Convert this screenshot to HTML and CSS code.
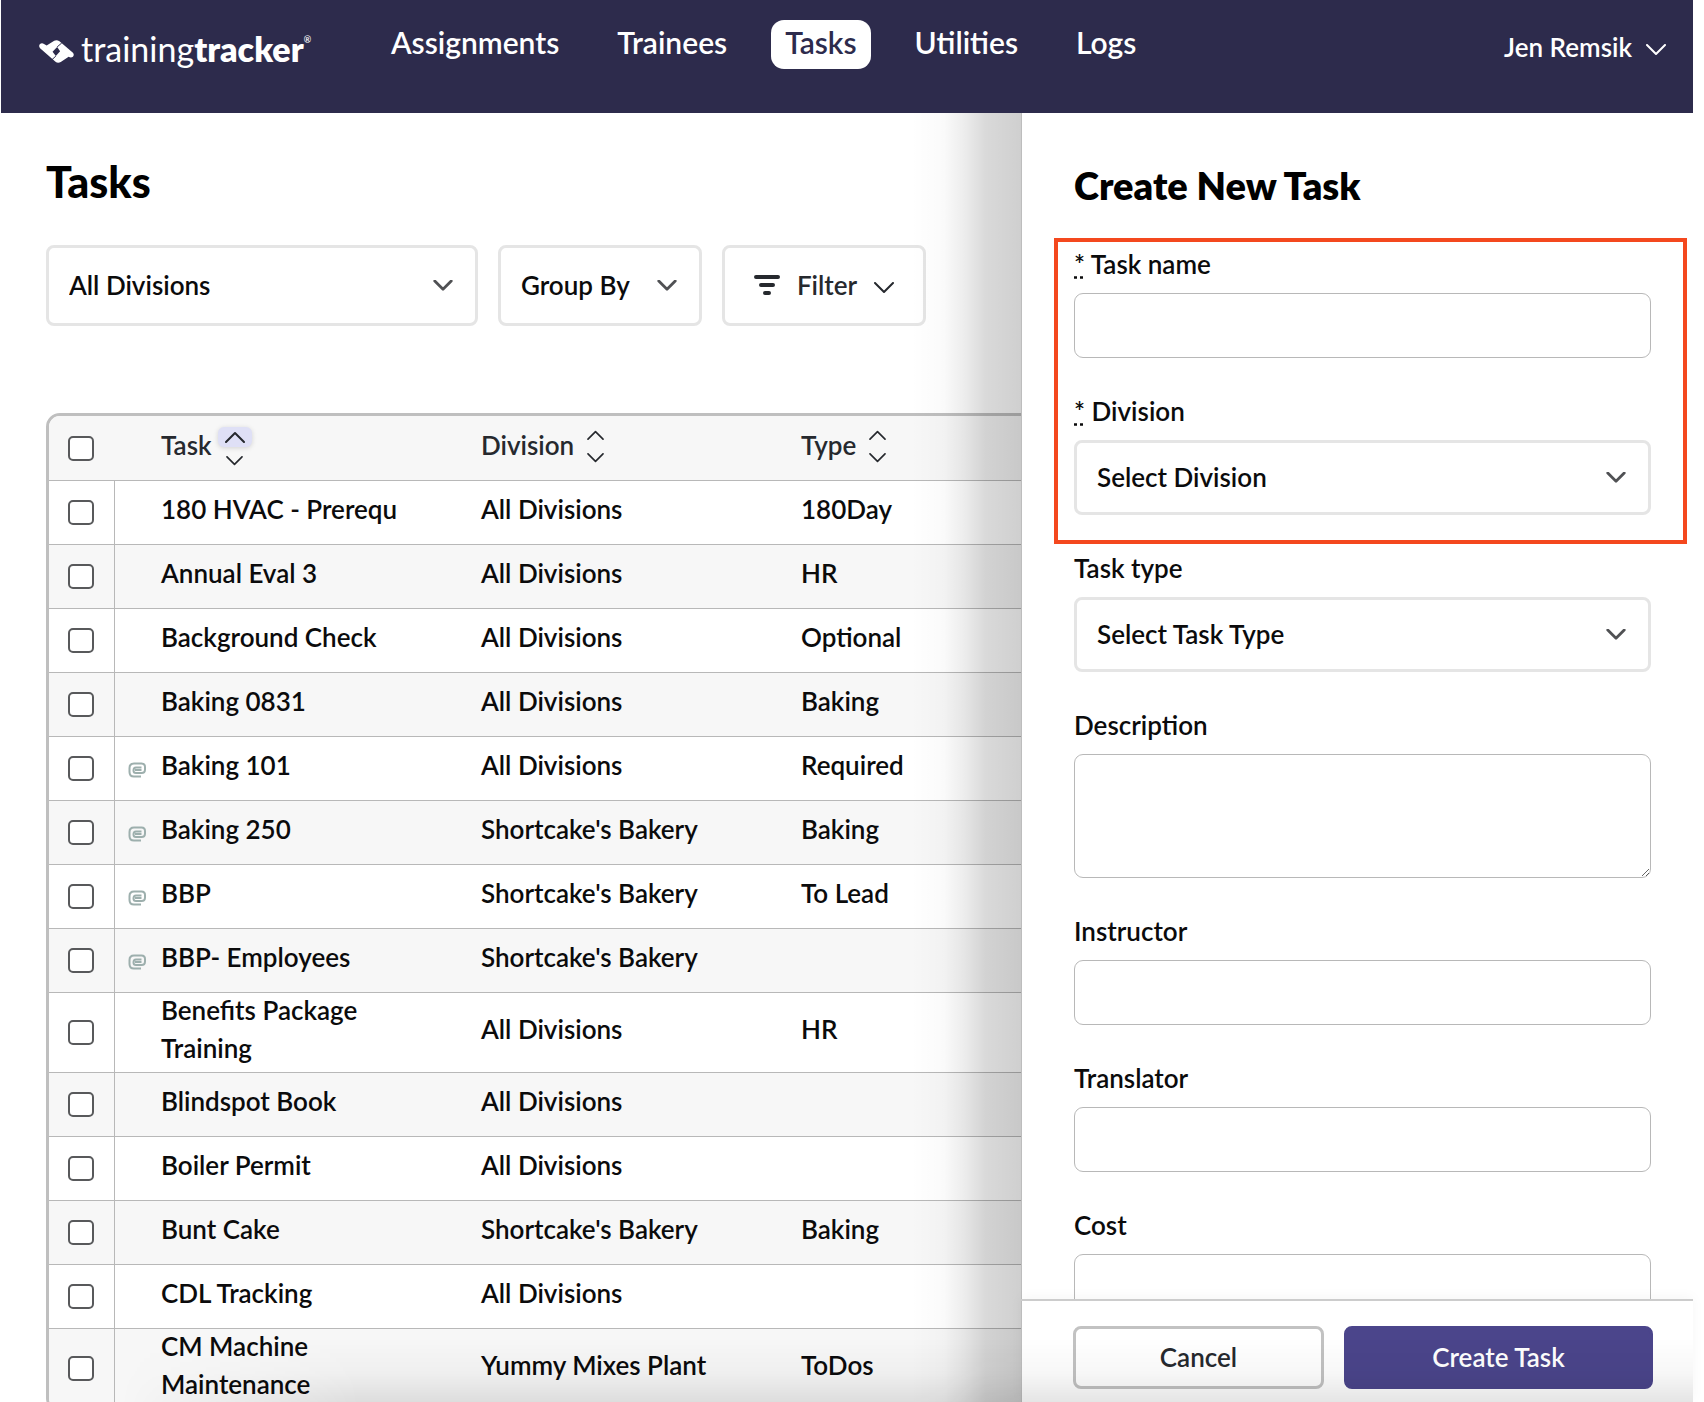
FILE: index.html
```html
<!DOCTYPE html>
<html lang="en">
<head>
<meta charset="utf-8">
<meta name="viewport" content="width=device-width, initial-scale=1">
<title>Tasks - trainingtracker</title>
<link rel="stylesheet" href="styles.css">
</head>
<body>
<svg class="sprite" aria-hidden="true">
  <symbol id="chevron-down" viewBox="0 0 20 12"><path d="M1 1l9 9 9-9" fill="none" stroke="currentColor" stroke-linecap="round" stroke-linejoin="round"/></symbol>
  <symbol id="chevron-up" viewBox="0 0 20 12"><path d="M1 11l9-9 9 9" fill="none" stroke="currentColor" stroke-linecap="round" stroke-linejoin="round"/></symbol>
  <symbol id="clip" viewBox="0 0 18 16"><path d="M13 14.500H6Q1.500 14.500 1.500 10V6Q1.500 1.500 6 1.500H13.500Q17 1.500 17 5V7.500Q17 11 13.500 11H8Q5.500 11 5.500 8.500 5.500 5.500 8 5.500H13.500M7 8H13.500" fill="none" stroke="currentColor" stroke-width="2"/></symbol>
</svg>

<header class="topbar">
  <a class="brand" href="#">
    <svg class="brand-mark" viewBox="0 0 106 70" aria-hidden="true">
      <path fill="#fff" fill-rule="evenodd" d="M2 13Q8 8 15 12L23 17 46 2Q54-2 62 4L103 39Q108 45 103 51 97 56 90 51L66 67Q57 72 50 66L3 25Q-2 19 2 13ZM41 36L51 49 64 34 55 21Z"/>
      <path stroke="#2d2b4c" stroke-width="3" fill="none" d="M55 21L69 9M51 49L38 61"/>
    </svg>
    <span class="brand-name">training<b>tracker</b></span><sup class="brand-reg">®</sup>
  </a>
  <nav class="nav" aria-label="Main">
    <a class="nav-link" href="#">Assignments</a>
    <a class="nav-link" href="#">Trainees</a>
    <a class="nav-link nav-link-active" href="#" aria-current="page">Tasks</a>
    <a class="nav-link" href="#">Utilities</a>
    <a class="nav-link" href="#">Logs</a>
  </nav>
  <button class="user" type="button">Jen Remsik <svg class="icon-thin icon-caret" aria-hidden="true"><use href="#chevron-down"/></svg></button>
</header>

<div class="workspace">
  <main class="content">
    <h1 class="page-title">Tasks</h1>
    <div class="toolbar">
      <div class="picker picker-wide">
        <select aria-label="Division filter"><option>All Divisions</option></select>
        <svg class="icon-bold" aria-hidden="true"><use href="#chevron-down"/></svg>
      </div>
      <div class="picker picker-small">
        <select aria-label="Group by"><option>Group By</option></select>
        <svg class="icon-bold" aria-hidden="true"><use href="#chevron-down"/></svg>
      </div>
      <button class="filter" type="button">
        <svg class="filter-icon" viewBox="0 0 26 20" aria-hidden="true"><path d="M2 2H24M7 10H19M11 18H15" stroke="currentColor" stroke-width="4" stroke-linecap="round"/></svg>
        <span>Filter</span>
        <svg class="icon-thin icon-caret" aria-hidden="true"><use href="#chevron-down"/></svg>
      </button>
    </div>

    <div class="table-frame">
      <table class="tasks">
        <colgroup><col class="col-check"><col class="col-clip"><col class="col-data"><col class="col-data"><col class="col-data"></colgroup>
        <thead>
          <tr>
            <th class="check"><input type="checkbox" aria-label="Select all tasks"></th>
            <th></th>
            <th><div class="sortable"><span class="heading">Task</span> <span class="sort"><span class="sort-on"><svg class="icon-thin" aria-hidden="true"><use href="#chevron-up"/></svg></span><svg class="icon-sort" aria-hidden="true"><use href="#chevron-down"/></svg></span></div></th>
            <th><div class="sortable"><span class="heading">Division</span> <span class="sort sort-plain"><svg class="icon-sort" aria-hidden="true"><use href="#chevron-up"/></svg><svg class="icon-sort" aria-hidden="true"><use href="#chevron-down"/></svg></span></div></th>
            <th><div class="sortable"><span class="heading">Type</span> <span class="sort sort-plain"><svg class="icon-sort" aria-hidden="true"><use href="#chevron-up"/></svg><svg class="icon-sort" aria-hidden="true"><use href="#chevron-down"/></svg></span></div></th>
          </tr>
        </thead>
        <tbody>
          <tr><td class="check"><input type="checkbox" aria-label="Select 180 HVAC - Prerequ"></td><td></td><td><span class="text">180 HVAC - Prerequ</span></td><td><span class="text">All Divisions</span></td><td><span class="text">180Day</span></td></tr>
          <tr><td class="check"><input type="checkbox" aria-label="Select Annual Eval 3"></td><td></td><td><span class="text">Annual Eval 3</span></td><td><span class="text">All Divisions</span></td><td><span class="text">HR</span></td></tr>
          <tr><td class="check"><input type="checkbox" aria-label="Select Background Check"></td><td></td><td><span class="text">Background Check</span></td><td><span class="text">All Divisions</span></td><td><span class="text">Optional</span></td></tr>
          <tr><td class="check"><input type="checkbox" aria-label="Select Baking 0831"></td><td></td><td><span class="text">Baking 0831</span></td><td><span class="text">All Divisions</span></td><td><span class="text">Baking</span></td></tr>
          <tr><td class="check"><input type="checkbox" aria-label="Select Baking 101"></td><td class="clip"><svg aria-hidden="true"><use href="#clip"/></svg></td><td><span class="text">Baking 101</span></td><td><span class="text">All Divisions</span></td><td><span class="text">Required</span></td></tr>
          <tr><td class="check"><input type="checkbox" aria-label="Select Baking 250"></td><td class="clip"><svg aria-hidden="true"><use href="#clip"/></svg></td><td><span class="text">Baking 250</span></td><td><span class="text">Shortcake's Bakery</span></td><td><span class="text">Baking</span></td></tr>
          <tr><td class="check"><input type="checkbox" aria-label="Select BBP"></td><td class="clip"><svg aria-hidden="true"><use href="#clip"/></svg></td><td><span class="text">BBP</span></td><td><span class="text">Shortcake's Bakery</span></td><td><span class="text">To Lead</span></td></tr>
          <tr><td class="check"><input type="checkbox" aria-label="Select BBP- Employees"></td><td class="clip"><svg aria-hidden="true"><use href="#clip"/></svg></td><td><span class="text">BBP- Employees</span></td><td><span class="text">Shortcake's Bakery</span></td><td></td></tr>
          <tr><td class="check"><input type="checkbox" aria-label="Select Benefits Package Training"></td><td></td><td><span class="text">Benefits Package Training</span></td><td><span class="text">All Divisions</span></td><td><span class="text">HR</span></td></tr>
          <tr><td class="check"><input type="checkbox" aria-label="Select Blindspot Book"></td><td></td><td><span class="text">Blindspot Book</span></td><td><span class="text">All Divisions</span></td><td></td></tr>
          <tr><td class="check"><input type="checkbox" aria-label="Select Boiler Permit"></td><td></td><td><span class="text">Boiler Permit</span></td><td><span class="text">All Divisions</span></td><td></td></tr>
          <tr><td class="check"><input type="checkbox" aria-label="Select Bunt Cake"></td><td></td><td><span class="text">Bunt Cake</span></td><td><span class="text">Shortcake's Bakery</span></td><td><span class="text">Baking</span></td></tr>
          <tr><td class="check"><input type="checkbox" aria-label="Select CDL Tracking"></td><td></td><td><span class="text">CDL Tracking</span></td><td><span class="text">All Divisions</span></td><td></td></tr>
          <tr><td class="check"><input type="checkbox" aria-label="Select CM Machine Maintenance"></td><td></td><td><span class="text">CM Machine Maintenance</span></td><td><span class="text">Yummy Mixes Plant</span></td><td><span class="text">ToDos</span></td></tr>
        </tbody>
      </table>
    </div>
  </main>

  <aside class="panel" aria-label="Create New Task">
    <form class="form">
      <div class="form-body">
        <h2 class="panel-title">Create New Task</h2>
        <div class="required-group">
          <div class="field">
            <label for="task-name"><abbr title="required">*</abbr> Task name</label>
            <input class="control" id="task-name" type="text">
          </div>
          <div class="field">
            <label for="division"><abbr title="required">*</abbr> Division</label>
            <div class="picker">
              <select id="division"><option>Select Division</option></select>
              <svg class="icon-bold" aria-hidden="true"><use href="#chevron-down"/></svg>
            </div>
          </div>
        </div>
        <div class="field">
          <label for="task-type">Task type</label>
          <div class="picker">
            <select id="task-type"><option>Select Task Type</option></select>
            <svg class="icon-bold" aria-hidden="true"><use href="#chevron-down"/></svg>
          </div>
        </div>
        <div class="field">
          <label for="description">Description</label>
          <textarea class="control control-tall" id="description"></textarea>
        </div>
        <div class="field">
          <label for="instructor">Instructor</label>
          <input class="control" id="instructor" type="text">
        </div>
        <div class="field">
          <label for="translator">Translator</label>
          <input class="control" id="translator" type="text">
        </div>
        <div class="field">
          <label for="cost">Cost</label>
          <input class="control" id="cost" type="text">
        </div>
      </div>
      <div class="form-footer">
        <button class="btn btn-cancel" type="button">Cancel</button>
        <button class="btn btn-primary" type="submit">Create Task</button>
      </div>
    </form>
  </aside>
</div>
<div class="bottom-shade"></div>
</body>
</html>
```
FILE: styles.css
```css
* {
  box-sizing: border-box;
}

body {
  display: flex;
  flex-direction: column;
  height: 100vh;
  margin: 0;
  padding: 0 11px 0 1px;
  overflow: hidden;
  background: #fff;
  color: #0b0b0c;
  font: 600 26px/38px Lato, "Open Sans", sans-serif;
}

button,
input,
select,
textarea {
  margin: 0;
  font: inherit;
  color: inherit;
}

button {
  cursor: pointer;
}

svg {
  display: block;
  flex: none;
}

.sprite {
  position: absolute;
  width: 0;
  height: 0;
}

/* Chevrons */
.icon-thin {
  width: 20px;
  height: 12px;
  stroke-width: 2px;
}

.icon-bold {
  width: 20px;
  height: 11px;
  color: #505154;
  stroke-width: 3px;
}

.icon-sort {
  width: 17px;
  height: 10px;
  stroke-width: 2px;
}

.icon-caret {
  margin-top: 6px;
}

/* Top bar */
.topbar {
  display: flex;
  align-items: flex-start;
  flex: none;
  height: 113px;
  padding: 20px 27px 0 38px;
  background: #2d2b4c;
  color: #fff;
}

.brand {
  display: flex;
  align-items: flex-start;
  width: 338px;
  padding-top: 10px;
  color: inherit;
  text-decoration: none;
}

.brand-mark {
  width: 35px;
  height: 23px;
  margin: 10px 7px 0 0;
}

.brand-name {
  font-size: 34px;
  font-weight: 400;
}

.brand-name b {
  font-weight: 800;
}

.brand-reg {
  padding-top: 5px;
  font-size: 9px;
  line-height: 9px;
}

.nav {
  display: flex;
  flex: 1;
  gap: 30px;
}

.nav-link {
  padding: 0 14px 4px;
  border-radius: 13px;
  color: inherit;
  font-size: 30px;
  line-height: 45px;
  text-decoration: none;
}

.nav-link-active {
  background: #fff;
  color: #2d2b4c;
}

.user {
  display: flex;
  align-items: center;
  gap: 14px;
  padding: 8px 0 0;
  border: 0;
  background: none;
}

/* Workspace */
.workspace {
  display: flex;
  flex: 1;
  min-height: 0;
}

.content {
  flex: 1;
  min-width: 0;
  padding: 45px 0 0 45px;
  overflow: hidden;
}

.page-title {
  margin: 0 0 39px;
  color: #000;
  font-size: 43px;
  font-weight: 900;
  line-height: 48px;
}

.toolbar {
  display: flex;
  gap: 20px;
  height: 81px;
  margin-bottom: 87px;
}

.picker {
  display: grid;
  align-items: center;
}

.picker > * {
  grid-area: 1 / 1;
}

.picker select {
  width: 100%;
  height: 100%;
  padding: 0 60px 2px 20px;
  border: 3px solid #e5e5e5;
  border-radius: 8px;
  background: #fff;
  appearance: none;
  outline: 0;
}

.picker svg {
  justify-self: end;
  margin-right: 25px;
  pointer-events: none;
}

.picker-wide {
  width: 432px;
}

.picker-small {
  width: 204px;
}

.filter {
  display: flex;
  align-items: center;
  justify-content: center;
  gap: 17px;
  width: 204px;
  padding: 0 0 2px;
  border: 3px solid #e5e5e5;
  border-radius: 8px;
  background: #fff;
  color: #26292e;
}

.filter-icon {
  width: 26px;
  height: 20px;
}

/* Task table */
.table-frame {
  width: max-content;
  overflow: hidden;
  border: 3px solid #bfbfbf;
  border-radius: 14px;
}

.tasks {
  width: 1072px;
  table-layout: fixed;
  border-spacing: 0;
}

.col-check {
  width: 66px;
}

.col-clip {
  width: 46px;
}

.col-data {
  width: 320px;
}

.tasks th,
.tasks td {
  height: 64px;
  padding: 0 0 3px;
  border-bottom: 1px solid #b8b8b8;
  text-align: left;
  vertical-align: middle;
}

.tasks th {
  height: 65px;
  background: #f7f7f7;
  color: #26292e;
  font-weight: 600;
}

.tasks tbody tr:nth-child(even) {
  background: #f7f7f7;
}

.tasks tbody .check {
  border-right: 1px solid #b8b8b8;
}

.tasks .check {
  padding: 0 0 0 19px;
}

.check input {
  display: block;
  width: 26px;
  height: 25px;
  border: 2px solid #58595b;
  border-radius: 5px;
  background: #fff;
  appearance: none;
}

.text {
  display: block;
  margin: -2px 40px 2px 0;
}

.tasks .clip {
  padding: 3px 0 0 13px;
}

.clip svg {
  width: 18px;
  height: 16px;
  color: #9dafad;
}

.sortable {
  display: flex;
  align-items: center;
  gap: 6px;
}

.heading {
  padding-bottom: 4px;
}

.sort {
  display: grid;
  gap: 9px;
  justify-items: center;
}

.sort-plain {
  gap: 13px;
  padding-left: 7px;
}

.sort-on {
  padding: 4px 7px;
  border-radius: 6px;
  background: #dfe0f6;
  box-shadow: 0 1px 5px rgba(0, 0, 0, .15);
}

/* Create task panel */
.panel {
  position: relative;
  width: 672px;
  border-left: 1px solid #bdbdbd;
  background: #fff;
}

.panel::before {
  content: "";
  position: absolute;
  top: 0;
  right: 100%;
  bottom: 0;
  width: 110px;
  margin-right: 1px;
  background: linear-gradient(to right, rgba(0, 0, 0, 0), rgba(0, 0, 0, .02) 30%, rgba(0, 0, 0, .07) 48%, rgba(0, 0, 0, .15) 68%, rgba(0, 0, 0, .19));
  pointer-events: none;
}

.form {
  display: flex;
  flex-direction: column;
  height: 100%;
}

.form-body {
  display: flex;
  flex: 1;
  flex-direction: column;
  gap: 33px;
  min-height: 0;
  padding: 50px 42px 0 52px;
  overflow: hidden;
}

.panel-title {
  margin: 0 0 4px;
  color: #000;
  font-size: 38px;
  font-weight: 800;
  line-height: 44px;
}

.required-group {
  position: relative;
  display: grid;
  gap: 33px;
}

.required-group::after {
  content: "";
  position: absolute;
  inset: -6px -36px -29px -20px;
  border: 4px solid #f4481e;
  pointer-events: none;
}

.field {
  display: grid;
  flex: none;
  gap: 9px;
}

.field label {
  line-height: 40px;
}

.field abbr {
  text-decoration: underline dotted;
}

.field .picker {
  height: 75px;
}

.control {
  display: block;
  width: 100%;
  height: 65px;
  padding: 0 20px;
  border: 1px solid #b8b8b8;
  border-radius: 9px;
  background: #fff;
}

.control-tall {
  height: 124px;
}

.form-footer {
  display: grid;
  flex: none;
  grid-template-columns: 251fr 309fr;
  gap: 20px;
  margin-left: -1px;
  padding: 25px 40px 13px 52px;
  border-top: 2px solid #ccc;
  box-shadow: 0 -2px 12px rgba(0, 0, 0, .04);
}

.btn {
  height: 63px;
  padding: 0 0 2px;
  border: 3px solid #c2c2c2;
  border-radius: 8px;
  background: #fff;
  color: #26292e;
}

.btn-primary {
  border-color: #4b458b;
  background: #4b458b;
  color: #fff;
}

/* Shade along the bottom edge of the window */
.bottom-shade {
  position: fixed;
  right: 11px;
  bottom: 0;
  left: 120px;
  height: 64px;
  background: linear-gradient(to bottom, rgba(0, 0, 0, 0), rgba(0, 0, 0, .03) 55%, rgba(0, 0, 0, .1));
  mask-image: linear-gradient(to right, transparent, #000 240px);
  pointer-events: none;
}
```
